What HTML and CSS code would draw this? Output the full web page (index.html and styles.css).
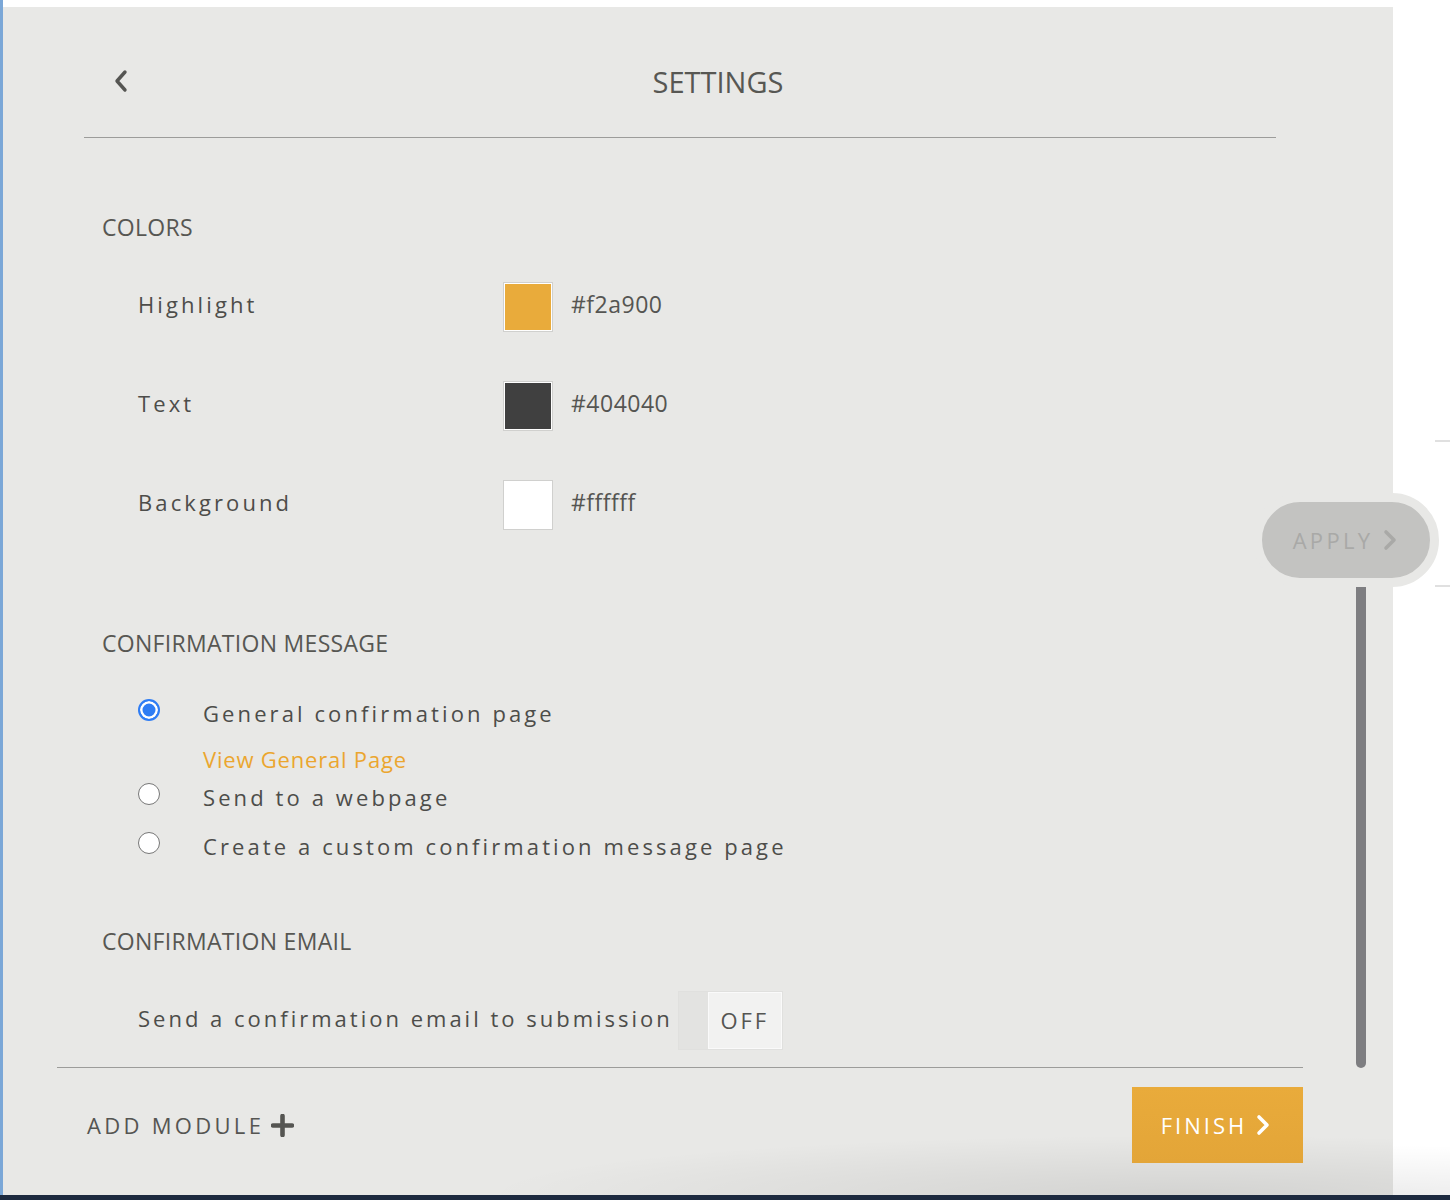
FILE: index.html
```html
<html>
<head>
    <meta charset="utf-8">
    <title>Settings</title>
    <link rel="stylesheet" href="styles.css">
</head>
<body>
    <div class="screen">
        <div class="edge"></div>
        <div class="stage">
            <div class="workspace">
                <main class="panel">
                    <div class="panel-body">
                        <header class="topbar">
                            <a class="back" href="#">
                                <svg width="14" height="24" viewBox="0 0 14 24"><polyline points="11,3 3,12 11,21" fill="none" stroke="#555552" stroke-width="3.4" stroke-linecap="round" stroke-linejoin="round"/></svg>
                            </a>
                            <h1 class="title">SETTINGS</h1>
                        </header>

                        <section class="group">
                            <h2 class="group-title group-colors">COLORS</h2>
                            <div class="color-list">
                                <div class="color-row">
                                    <span class="label">Highlight</span>
                                    <span class="swatch swatch-highlight"></span>
                                    <span class="hex">#f2a900</span>
                                </div>
                                <div class="color-row">
                                    <span class="label">Text</span>
                                    <span class="swatch swatch-text"></span>
                                    <span class="hex">#404040</span>
                                </div>
                                <div class="color-row">
                                    <span class="label">Background</span>
                                    <span class="swatch swatch-bg"></span>
                                    <span class="hex">#ffffff</span>
                                </div>
                            </div>
                        </section>

                        <section class="group">
                            <h2 class="group-title group-message">CONFIRMATION MESSAGE</h2>
                            <div class="option option-first">
                                <span class="radio radio-on"></span>
                                <span class="label">General confirmation page</span>
                            </div>
                            <a class="view-link" href="#">View General Page</a>
                            <div class="option option-second">
                                <span class="radio"></span>
                                <span class="label">Send to a webpage</span>
                            </div>
                            <div class="option option-third">
                                <span class="radio"></span>
                                <span class="label">Create a custom confirmation message page</span>
                            </div>
                        </section>

                        <section class="group">
                            <h2 class="group-title group-email">CONFIRMATION EMAIL</h2>
                            <div class="email-row">
                                <span class="label">Send a confirmation email to submission</span>
                                <div class="toggle">
                                    <span class="toggle-track"></span>
                                    <span class="toggle-state">OFF</span>
                                </div>
                            </div>
                        </section>
                    </div>

                    <footer class="panel-foot">
                        <a class="add-module" href="#">ADD MODULE
                            <svg width="23" height="23" viewBox="0 0 23 23"><path d="M11.5 2v19M2 11.5h19" stroke="#555552" stroke-width="4.6" stroke-linecap="round"/></svg>
                        </a>
                        <a class="finish" href="#">FINISH
                            <svg width="14" height="22" viewBox="0 0 14 22"><polyline points="3,3 11,11 3,19" fill="none" stroke="#fff" stroke-width="3.6" stroke-linecap="round" stroke-linejoin="round"/></svg>
                        </a>
                    </footer>

                    <div class="scrollbar"></div>
                    <a class="apply" href="#">APPLY
                        <svg width="14" height="22" viewBox="0 0 14 22"><polyline points="3,3 11,11 3,19" fill="none" stroke="#a9a9a7" stroke-width="3.6" stroke-linecap="round" stroke-linejoin="round"/></svg>
                    </a>
                </main>
                <aside class="side">
                    <span class="side-mark"></span>
                    <span class="side-mark side-mark-low"></span>
                </aside>
            </div>
        </div>
    </div>
    <div class="taskbar"></div>
</body>
</html>
```

FILE: styles.css
```css
body{
    margin: 0;
    font-family: "Open Sans", "Noto Sans", sans-serif;
    color: #4d4d4a;
    background: #fff;
}

a{
    text-decoration: none;
}

.screen{
    display: flex;
    height: 1195px;
}

.edge{
    width: 3px;
    background: #7ba7d7;
}

.stage{
    flex: 1;
    display: flex;
    flex-direction: column;
    padding-top: 7px;
    background: #fff;
    background-image: radial-gradient(ellipse 500px 50px at 96% 100%, rgba(0,0,0,0.07), rgba(0,0,0,0));
}

.workspace{
    flex: 1;
    display: flex;
}

.panel{
    position: relative;
    width: 1390px;
    display: flex;
    flex-direction: column;
    background: #e8e8e6;
    background-image: radial-gradient(ellipse 700px 60px at 85% 100%, rgba(0,0,0,0.09), rgba(0,0,0,0));
}

.panel-body{
    margin-left: 81px;
    width: 1192px;
}

/* header */
.topbar{
    display: flex;
    align-items: center;
    height: 131px;
    box-sizing: border-box;
    padding-top: 18px;
    border-bottom: 1px solid #9c9c9a;
}

.back{
    display: flex;
    width: 60px;
    padding-left: 30px;
    box-sizing: border-box;
}

.title{
    flex: 1;
    margin: 0;
    padding-left: 16px;
    text-align: center;
    font-size: 29px;
    font-weight: 400;
    color: #575753;
}

/* sections */
.group-title{
    margin: 0 0 0 18px;
    font-size: 23px;
    font-weight: 400;
    letter-spacing: 0.3px;
    line-height: 30px;
    color: #575753;
}

.group-colors{
    margin-top: 74px;
}

.group-message{
    margin-top: 98px;
}

.group-email{
    margin-top: 65px;
}

.label{
    font-size: 22px;
    letter-spacing: 3.1px;
    color: #4d4d4a;
}

.color-list{
    display: flex;
    flex-direction: column;
    gap: 49px;
    margin-top: 40px;
    padding-left: 54px;
}

.color-row{
    display: flex;
    align-items: center;
    height: 50px;
}

.color-row .label{
    width: 365px;
    padding-bottom: 6px;
}

.swatch{
    width: 48px;
    height: 48px;
    border: 1px solid #d0d0ce;
    box-shadow: inset 0 0 0 1px #fff;
}

.swatch-highlight{
    background: #e9ab3b;
}

.swatch-text{
    background: #404040;
}

.swatch-bg{
    background: #fff;
}

.hex{
    margin-left: 18px;
    padding-bottom: 6px;
    font-size: 23px;
    letter-spacing: 0.5px;
    color: #555552;
}

/* radio options */
.option{
    display: flex;
    align-items: center;
    height: 30px;
    padding-left: 54px;
}

.option-first{
    margin-top: 40px;
}

.option-second{
    margin-top: 8px;
}

.option-third{
    margin-top: 19px;
}

.radio{
    width: 20px;
    height: 20px;
    margin-right: 43px;
    margin-bottom: 6px;
    border: 1px solid #777;
    border-radius: 50%;
    background: #fff;
    flex-shrink: 0;
}

.radio-on{
    width: 18px;
    height: 18px;
    border: 2px solid #2f7df4;
    background: #2f7df4;
    box-shadow: inset 0 0 0 2.5px #fff;
}

.view-link{
    display: block;
    margin-top: 16px;
    margin-left: 119px;
    font-size: 22px;
    letter-spacing: 0.8px;
    line-height: 30px;
    color: #eba62f;
}

/* email */
.email-row{
    display: flex;
    align-items: center;
    height: 59px;
    margin-top: 35px;
    padding-left: 54px;
}

.email-row .label{
    padding-bottom: 6px;
    letter-spacing: 3px;
}

.toggle{
    display: flex;
    margin-left: 5px;
    height: 59px;
    box-sizing: border-box;
    border: 1px solid #e0e0de;
    background: #e3e3e1;
}

.toggle-track{
    width: 29px;
}

.toggle-state{
    display: flex;
    align-items: center;
    justify-content: center;
    width: 74px;
    padding-bottom: 2px;
    box-sizing: border-box;
    border: 1px solid #fafafa;
    background: #f2f2f1;
    font-size: 22px;
    letter-spacing: 3px;
    color: #555552;
}

/* footer */
.panel-foot{
    display: flex;
    align-items: center;
    justify-content: space-between;
    width: 1246px;
    margin: 17px 0 0 54px;
    padding: 19px 0 0 30px;
    box-sizing: border-box;
    border-top: 1px solid #9c9c9a;
}

.add-module{
    display: flex;
    align-items: center;
    gap: 7px;
    font-size: 22px;
    letter-spacing: 3.3px;
    color: #555552;
}

.finish{
    display: flex;
    align-items: center;
    justify-content: center;
    gap: 9px;
    width: 171px;
    height: 76px;
    padding-right: 4px;
    box-sizing: border-box;
    background: linear-gradient(#e9ab3b, #e3a538);
    font-size: 22px;
    letter-spacing: 3px;
    color: #fff;
}

.scrollbar{
    position: absolute;
    left: 1353px;
    top: 580px;
    width: 10px;
    height: 481px;
    border-radius: 0 0 5px 5px;
    background: #7e7e81;
}

.apply{
    position: absolute;
    left: 1250px;
    top: 486px;
    display: flex;
    align-items: center;
    justify-content: center;
    gap: 10px;
    width: 166px;
    height: 76px;
    padding-right: 2px;
    border: 9px solid #e8e8e6;
    border-radius: 50px;
    background: #c3c3c1;
    font-size: 22px;
    letter-spacing: 3.3px;
    color: #a9a9a7;
}

.side{
    flex: 1;
    display: flex;
    flex-direction: column;
    align-items: flex-end;
    padding-top: 433px;
}

.side-mark{
    width: 15px;
    height: 2px;
    background: #e0e0e0;
}

.side-mark-low{
    margin-top: 143px;
}

.taskbar{
    height: 5px;
    background: #1d2a3f;
}
```
